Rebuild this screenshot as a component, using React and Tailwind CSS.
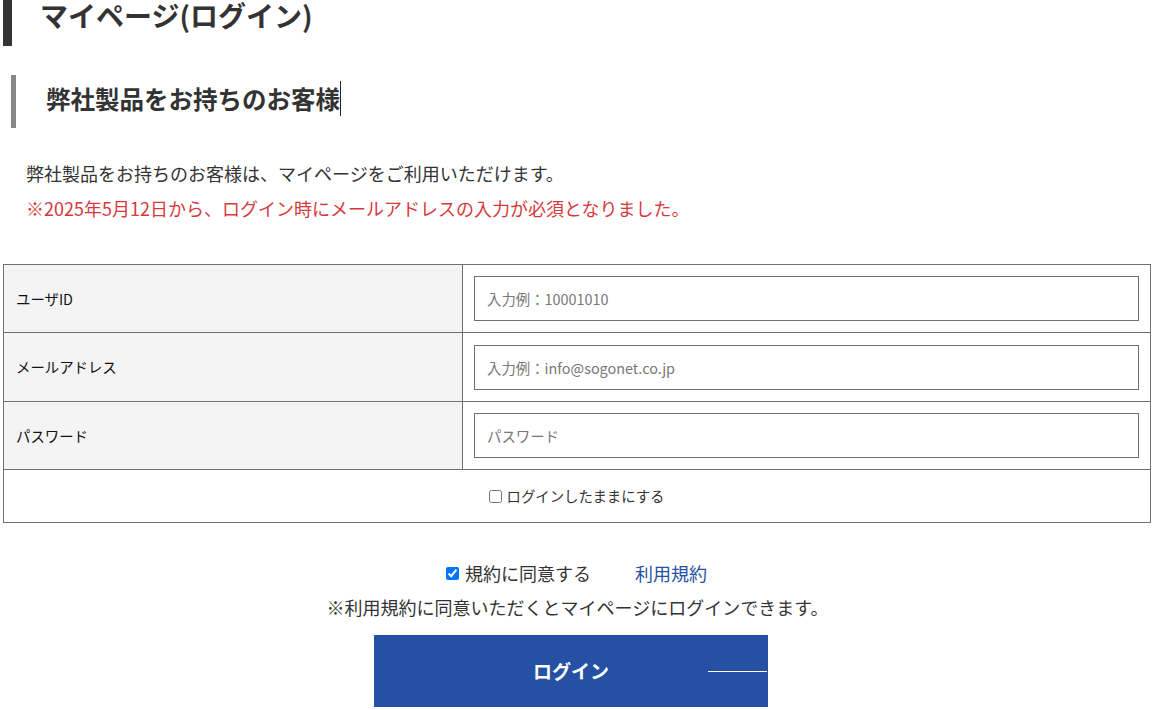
import { useState } from 'react';

const rows = [
    { label: 'ユーザID', placeholder: '入力例：10001010', type: 'text' },
    { label: 'メールアドレス', placeholder: '入力例：info@sogonet.co.jp', type: 'email' },
    { label: 'パスワード', placeholder: 'パスワード', type: 'password' },
];

export default function App() {
    const [keep, setKeep] = useState(false);
    const [agree, setAgree] = useState(true);

    return (
        <div className="min-h-screen bg-white text-[#333] font-['Noto_Sans_CJK_JP','Noto_Sans',sans-serif]">
            {/* Page title */}
            <h1 className="ml-[3px] h-[46px] border-l-[9px] border-[#333] pl-[28px] text-[28px] font-bold leading-[30px]">
                マイページ(ログイン)
            </h1>

            {/* Section heading */}
            <h2 className="ml-[11px] mt-[29px] flex h-[53px] items-center border-l-[5px] border-[#888] pb-[6px] pl-[30px] text-[24.5px] font-bold">
                <span className="border-r border-[#222] leading-[35px]">弊社製品をお持ちのお客様</span>
            </h2>

            {/* Intro */}
            <div className="mt-[28px] pl-[26px] text-[18px] leading-[35px]">
                <p>弊社製品をお持ちのお客様は、マイページをご利用いただけます。</p>
                <p className="text-[#d6393b]">※2025年5月12日から、ログイン時にメールアドレスの入力が必須となりました。</p>
            </div>

            {/* Login form */}
            <div className="ml-[3px] mt-[38px] w-[1148px] border border-[#707070]">
                {rows.map((row, i) => (
                    <div key={row.label} className="flex border-b border-[#707070]">
                        <div className="flex w-[459px] items-center border-r border-[#707070] bg-[#f4f4f4] pl-[12px] text-[14.4px] text-[#111]">
                            {row.label}
                        </div>
                        <div className={i === 1 ? 'flex-1 px-[11px] py-[11.5px]' : 'flex-1 p-[11px]'}>
                            <input
                                type={row.type}
                                placeholder={row.placeholder}
                                className="block h-[45px] w-full border border-[#707070] px-[12px] text-[14.4px] text-[#333] outline-none placeholder:text-[#777]"
                            />
                        </div>
                    </div>
                ))}
                <label className="flex h-[52px] items-center justify-center gap-[4px] text-[14.4px] text-[#333]">
                    <input
                        type="checkbox"
                        checked={keep}
                        onChange={() => setKeep(!keep)}
                        className="m-0 h-[13px] w-[13px]"
                    />
                    ログインしたままにする
                </label>
            </div>

            {/* Terms */}
            <div className="mt-[38px] flex items-center justify-center gap-[44px] pr-[12px] text-[18px] leading-[24px]">
                <label className="flex items-center gap-[6px]">
                    <input
                        type="checkbox"
                        checked={agree}
                        onChange={() => setAgree(!agree)}
                        className="m-0 h-[13px] w-[13px]"
                    />
                    規約に同意する
                </label>
                <a href="#" className="text-[#2650a4]">利用規約</a>
            </div>
            <p className="mt-[10px] pr-[10px] text-center text-[18px] leading-[24px]">
                ※利用規約に同意いただくとマイページにログインできます。
            </p>

            <div className="mt-[16px] flex justify-center pr-[23px]">
                <button className="relative h-[72px] w-[394px] bg-[#2650a4] text-[19px] font-bold text-white">
                    ログイン
                    <span className="absolute right-px top-1/2 h-px w-[59px] bg-white" />
                </button>
            </div>
        </div>
    );
}
